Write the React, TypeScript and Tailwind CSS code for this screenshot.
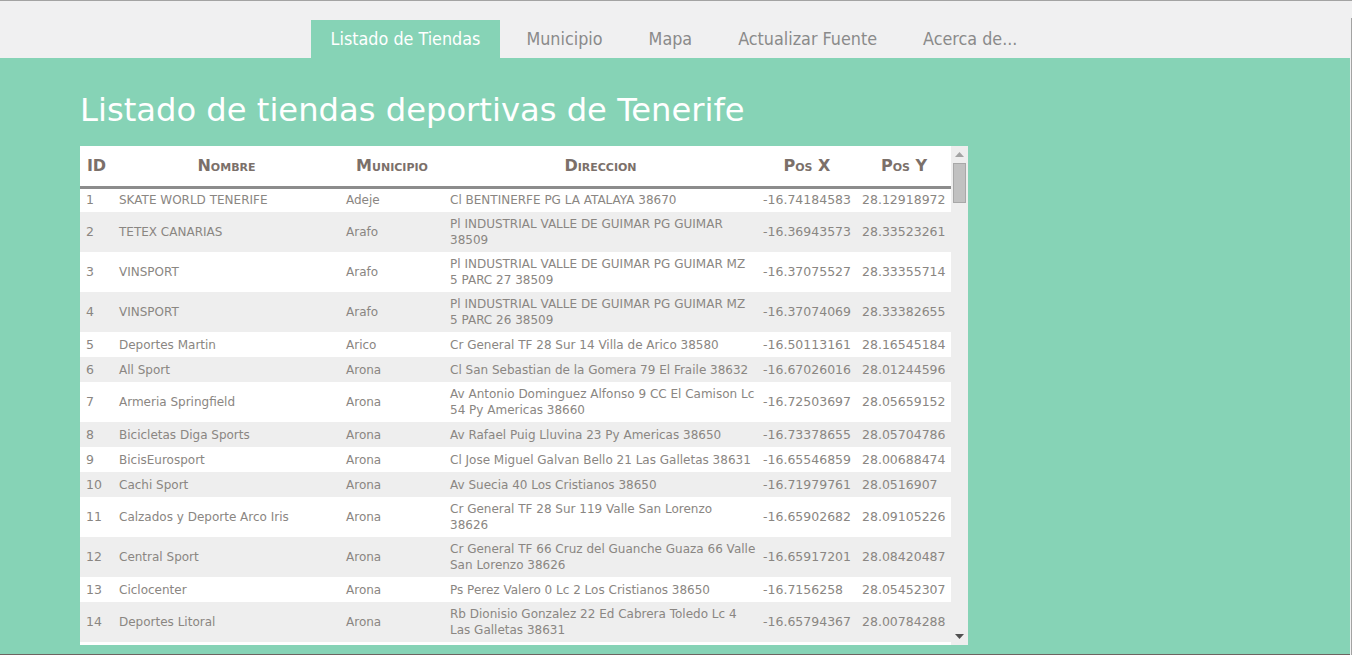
import React from 'react';

type Tienda = {
  id: number;
  nombre: string;
  municipio: string;
  direccion: string[];
  x: string;
  y: string;
};

const tiendas: Tienda[] = [
  { id: 1, nombre: 'SKATE WORLD TENERIFE', municipio: 'Adeje', direccion: ['Cl BENTINERFE PG LA ATALAYA 38670'], x: '-16.74184583', y: '28.12918972' },
  { id: 2, nombre: 'TETEX CANARIAS', municipio: 'Arafo', direccion: ['Pl INDUSTRIAL VALLE DE GUIMAR PG GUIMAR', '38509'], x: '-16.36943573', y: '28.33523261' },
  { id: 3, nombre: 'VINSPORT', municipio: 'Arafo', direccion: ['Pl INDUSTRIAL VALLE DE GUIMAR PG GUIMAR MZ', '5 PARC 27 38509'], x: '-16.37075527', y: '28.33355714' },
  { id: 4, nombre: 'VINSPORT', municipio: 'Arafo', direccion: ['Pl INDUSTRIAL VALLE DE GUIMAR PG GUIMAR MZ', '5 PARC 26 38509'], x: '-16.37074069', y: '28.33382655' },
  { id: 5, nombre: 'Deportes Martin', municipio: 'Arico', direccion: ['Cr General TF 28 Sur 14 Villa de Arico 38580'], x: '-16.50113161', y: '28.16545184' },
  { id: 6, nombre: 'All Sport', municipio: 'Arona', direccion: ['Cl San Sebastian de la Gomera 79 El Fraile 38632'], x: '-16.67026016', y: '28.01244596' },
  { id: 7, nombre: 'Armeria Springfield', municipio: 'Arona', direccion: ['Av Antonio Dominguez Alfonso 9 CC El Camison Lc', '54 Py Americas 38660'], x: '-16.72503697', y: '28.05659152' },
  { id: 8, nombre: 'Bicicletas Diga Sports', municipio: 'Arona', direccion: ['Av Rafael Puig Lluvina 23 Py Americas 38650'], x: '-16.73378655', y: '28.05704786' },
  { id: 9, nombre: 'BicisEurosport', municipio: 'Arona', direccion: ['Cl Jose Miguel Galvan Bello 21 Las Galletas 38631'], x: '-16.65546859', y: '28.00688474' },
  { id: 10, nombre: 'Cachi Sport', municipio: 'Arona', direccion: ['Av Suecia 40 Los Cristianos 38650'], x: '-16.71979761', y: '28.0516907' },
  { id: 11, nombre: 'Calzados y Deporte Arco Iris', municipio: 'Arona', direccion: ['Cr General TF 28 Sur 119 Valle San Lorenzo', '38626'], x: '-16.65902682', y: '28.09105226' },
  { id: 12, nombre: 'Central Sport', municipio: 'Arona', direccion: ['Cr General TF 66 Cruz del Guanche Guaza 66 Valle', 'San Lorenzo 38626'], x: '-16.65917201', y: '28.08420487' },
  { id: 13, nombre: 'Ciclocenter', municipio: 'Arona', direccion: ['Ps Perez Valero 0 Lc 2 Los Cristianos 38650'], x: '-16.7156258', y: '28.05452307' },
  { id: 14, nombre: 'Deportes Litoral', municipio: 'Arona', direccion: ['Rb Dionisio Gonzalez 22 Ed Cabrera Toledo Lc 4', 'Las Galletas 38631'], x: '-16.65794367', y: '28.00784288' },
];

const tabs = ['Listado de Tiendas', 'Municipio', 'Mapa', 'Actualizar Fuente', 'Acerca de...'];

export default function App() {
  return (
    <div className="flex h-[655px] w-full overflow-hidden border-t border-[#a3a3a3] bg-[#f0f0f1] font-['DejaVu_Sans',sans-serif]">
      <div className="flex flex-1 flex-col">
        {/* Navegación */}
        <nav className="flex h-[57px] items-end justify-center gap-[6px] pr-[2px]">
          {tabs.map((t, i) => (
            <a
              key={t}
              className={`flex h-[38px] items-center px-5 font-['DejaVu_Sans_Condensed','DejaVu_Sans',sans-serif] text-[17.8px] ${
                i === 0 ? 'bg-[#86d3b6] text-white' : 'text-[#8a8a8a]'
              }`}
            >
              {t}
            </a>
          ))}
        </nav>

        <main className="flex-1 bg-[#86d3b6] pl-[80px] pt-[30px]">
          <h1 className="text-[32.2px] leading-[44px] text-white">Listado de tiendas deportivas de Tenerife</h1>

          <div className="mt-[14px] flex h-[499px] w-[888px] overflow-hidden bg-white">
            <div className="w-[871px] overflow-hidden">
              <table className="w-[871px] table-fixed border-collapse text-[12px] text-[#8a8682]">
                <colgroup>
                  <col className="w-[33px]" />
                  <col className="w-[227px]" />
                  <col className="w-[104px]" />
                  <col className="w-[313px]" />
                  <col className="w-[100px]" />
                  <col className="w-[94px]" />
                </colgroup>
                <thead>
                  <tr className="h-[41px] border-b-[3px] border-[#8c8c8c] text-[16px] font-bold text-[#7b706a] [font-variant:small-caps]">
                    <th className="text-center">ID</th>
                    <th className="text-center">Nombre</th>
                    <th className="text-center">Municipio</th>
                    <th className="text-center">Direccion</th>
                    <th className="text-center">Pos X</th>
                    <th className="text-center">Pos Y</th>
                  </tr>
                </thead>
                <tbody>
                  {tiendas.map((t, i) => (
                    <tr
                      key={t.id}
                      className={`${t.direccion.length > 1 ? 'h-[40px]' : 'h-[25px]'} ${
                        i % 2 === 1 ? 'bg-[#eeeeee]' : 'bg-white'
                      } leading-[16px]`}
                    >
                      <td className="px-[6px] text-[12.5px]">{t.id}</td>
                      <td className="px-[6px]">{t.nombre}</td>
                      <td className="px-[6px]">{t.municipio}</td>
                      <td className="px-[6px]">
                        {t.direccion.map((l) => (
                          <div key={l} className="whitespace-nowrap">
                            {l}
                          </div>
                        ))}
                      </td>
                      <td className="pl-[6px] text-[12.5px]">{t.x}</td>
                      <td className="pl-[5px] text-[12.5px]">{t.y}</td>
                    </tr>
                  ))}
                </tbody>
              </table>
            </div>

            {/* Barra de desplazamiento */}
            <div className="flex w-[17px] flex-col items-center bg-[#eeeeee]">
              <svg width="9" height="5" viewBox="0 0 9 5" className="mt-[6px]">
                <path d="M0 5 L4.5 0 L9 5 Z" fill="#a3a3a3" />
              </svg>
              <div className="mt-[6px] h-[40px] w-[13px] border border-[#a8a8a8] bg-[#c1c1c1]" />
              <div className="flex-1" />
              <svg width="9" height="5" viewBox="0 0 9 5" className="mb-[6px]">
                <path d="M0 0 L9 0 L4.5 5 Z" fill="#505050" />
              </svg>
            </div>
          </div>
        </main>
        <div className="h-[1px] bg-[#6e6360]" />
      </div>
      <div className="flex w-[2px] flex-col">
        <div className="ml-[1px] mt-[17px] flex-1 bg-[#a3a3a3]" />
      </div>
    </div>
  );
}
